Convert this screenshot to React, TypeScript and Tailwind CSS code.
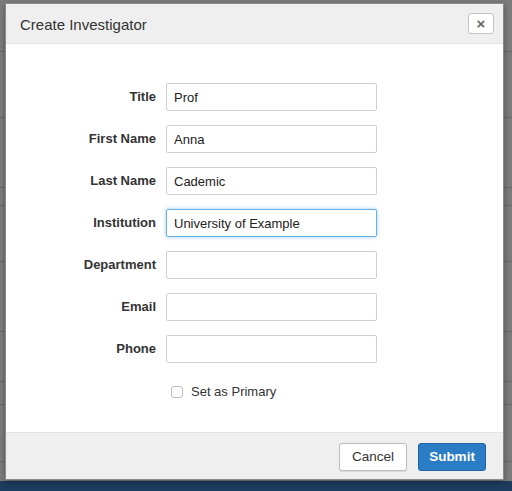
import React from 'react';

const fields = [
  { label: 'Title', value: 'Prof' },
  { label: 'First Name', value: 'Anna' },
  { label: 'Last Name', value: 'Cademic' },
  { label: 'Institution', value: 'University of Example', focused: true },
  { label: 'Department', value: '' },
  { label: 'Email', value: '' },
  { label: 'Phone', value: '' },
];

const bgRows = [52, 66, 70, 18, 56, 70, 50, 23, 57];

function FieldRow({ label, value, focused }: { label: string; value: string; focused?: boolean }) {
  return (
    <div className="flex items-center h-[28px]">
      <label className="w-[160px] pr-[10px] text-right text-[13px] font-bold text-[#333]">{label}</label>
      <input
        readOnly
        value={value}
        className={
          focused
            ? 'w-[211px] h-[28px] px-[7px] text-[13px] text-[#222] bg-white border border-[#66afe9] rounded-[2px] outline-none shadow-[0_0_4px_rgba(102,175,233,0.6)]'
            : 'w-[211px] h-[28px] px-[7px] text-[13px] text-[#222] bg-white border border-[#cfcfcf] rounded-[2px] outline-none'
        }
      />
    </div>
  );
}

export default function App() {
  return (
    <div className="relative w-[512px] h-[491px] overflow-hidden bg-[#7c7c7c] font-['Liberation_Sans',Arial,sans-serif]">
      {/* dimmed page behind the modal */}
      <div className="flex flex-col">
        {bgRows.map((h, i) => (
          <div key={i} className="border-b border-[#6a6a6a]" style={{ height: h }} />
        ))}
      </div>
      <div className="absolute left-0 right-0 bottom-0 h-[10px] bg-[#1d3c5e]" />

      {/* modal */}
      <div className="absolute left-[5px] top-[3px] w-[499px] h-[477px] flex flex-col bg-white border border-[#8a8a8a] shadow-[0_2px_6px_rgba(0,0,0,0.35)]">
        <div className="h-[40px] flex items-center justify-between pl-[14px] pr-[9px] bg-[#efefef] border-b border-[#e2e2e2]">
          <h4 className="text-[15px] text-[#333] mt-[3px]">Create Investigator</h4>
          <button className="w-[26px] h-[21px] flex items-center justify-center bg-white border border-[#c4c4c4] rounded-[3px] text-[#666] text-[15px] font-bold leading-none">
            ×
          </button>
        </div>
        <div className="flex-1 flex flex-col pt-[39px] gap-[14px]">
          {fields.map(f => (
            <FieldRow key={f.label} {...f} />
          ))}
          <div className="flex items-center gap-[8px] pl-[165px] mt-[5px]">
            <span className="w-[12px] h-[12px] bg-white border border-[#bdbdbd] rounded-[3px]" />
            <span className="text-[13px] text-[#333]">Set as Primary</span>
          </div>
        </div>
        <div className="h-[47px] flex items-center justify-end gap-[11px] pr-[17px] pt-[2px] bg-[#efefef] border-t border-[#e2e2e2]">
          <button className="w-[68px] h-[28px] bg-white border border-[#bdbdbd] rounded-[3px] text-[13.5px] text-[#333] shadow-[0_1px_1px_rgba(0,0,0,0.1)]">
            Cancel
          </button>
          <button className="w-[68px] h-[28px] bg-[#2a7cc4] border border-[#1f66a8] rounded-[3px] text-[13.5px] font-bold text-white">
            Submit
          </button>
        </div>
      </div>
    </div>
  );
}
